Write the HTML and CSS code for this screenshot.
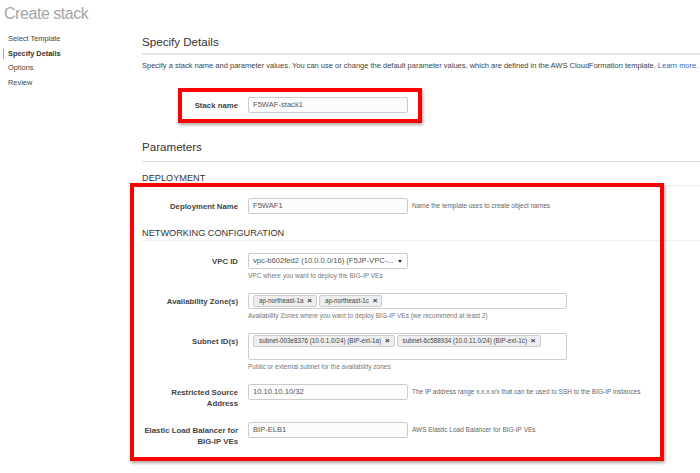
FILE: index.html
```html
<!DOCTYPE html>
<html lang="en">
<head>
  <meta charset="UTF-8">
  <meta name="viewport" content="width=device-width, initial-scale=1.0">
  <title>Create stack</title>
  <link rel="stylesheet" href="styles.css">
</head>
<body>

    <header class="page-title">Create stack</header>

    <div class="layout">
        <!-- wizard steps -->
        <nav class="steps">
            <a class="step">Select Template</a>
            <a class="step active">Specify Details</a>
            <a class="step">Options</a>
            <a class="step">Review</a>
        </nav>

        <main class="content">
            <section>
                <h2 class="section-title first">Specify Details</h2>
                <p class="intro">Specify a stack name and parameter values. You can use or change the default parameter values, which are defined in the AWS CloudFormation template. <a href="#" class="learn-link">Learn more.</a></p>

                <div class="field-row">
                    <label class="field-label">Stack name</label>
                    <div class="field-control">
                        <div class="text-input">F5WAF-stack1</div>
                    </div>
                </div>
            </section>

            <section>
                <h2 class="section-title">Parameters</h2>

                <h3 class="group-title">DEPLOYMENT</h3>
                <div class="field-row">
                    <label class="field-label">Deployment Name</label>
                    <div class="field-control">
                        <div class="text-input">F5WAF1</div>
                    </div>
                    <span class="side-help">Name the template uses to create object names</span>
                </div>

                <h3 class="group-title">NETWORKING CONFIGURATION</h3>
                <div class="field-row">
                    <label class="field-label">VPC ID</label>
                    <div class="field-control">
                        <div class="select-input">
                            <span>vpc-b602fed2 (10.0.0.0/16) (F5JP-VPC-...</span>
                            <span class="caret"></span>
                        </div>
                        <p class="field-help">VPC where you want to deploy the BIG-IP VEs</p>
                    </div>
                </div>

                <div class="field-row">
                    <label class="field-label">Availability Zone(s)</label>
                    <div class="field-control wide">
                        <div class="tag-input">
                            <span class="tag">ap-northeast-1a <b>&times;</b></span>
                            <span class="tag">ap-northeast-1c <b>&times;</b></span>
                        </div>
                        <p class="field-help">Availability Zones where you want to deploy BIG-IP VEs (we recommend at least 2)</p>
                    </div>
                </div>

                <div class="field-row">
                    <label class="field-label">Subnet ID(s)</label>
                    <div class="field-control wide">
                        <div class="tag-input tall">
                            <span class="tag">subnet-003e8376 (10.0.1.0/24) (BIP-ext-1a) <b>&times;</b></span>
                            <span class="tag">subnet-6c588934 (10.0.11.0/24) (BIP-ext-1c) <b>&times;</b></span>
                        </div>
                        <p class="field-help">Public or external subnet for the availability zones</p>
                    </div>
                </div>

                <div class="field-row">
                    <label class="field-label">Restricted Source Address</label>
                    <div class="field-control">
                        <div class="text-input">10.10.10.10/32</div>
                    </div>
                    <span class="side-help">The IP address range x.x.x.x/x that can be used to SSH to the BIG-IP instances</span>
                </div>

                <div class="field-row">
                    <label class="field-label">Elastic Load Balancer for BIG-IP VEs</label>
                    <div class="field-control">
                        <div class="text-input">BIP-ELB1</div>
                    </div>
                    <span class="side-help">AWS Elastic Load Balancer for BIG-IP VEs</span>
                </div>
            </section>
        </main>
    </div>

    <!-- red highlight frames -->
    <div class="callout callout-stack"></div>
    <div class="callout callout-params"></div>

</body>
</html>
```

FILE: styles.css
```css
/* Reset default margin and padding */
body, h1, h2, h3, p, label {
    margin: 0;
    padding: 0;
}

body {
    font-family: "Liberation Sans", Arial, sans-serif;
    background-color: #ffffff;
    color: #333333;
    overflow: hidden;
}

.page-title {
    font-size: 16px;
    letter-spacing: -0.45px;
    line-height: 20px;
    padding: 4px 0 4px 4px;
    color: #a6a6a6;
}

.layout {
    display: flex;
}

/* Wizard steps */
.steps {
    width: 142px;
    flex-shrink: 0;
    padding-top: 6px;
    display: flex;
    flex-direction: column;
}

.step {
    font-size: 7.4px;
    line-height: 10.6px;
    margin: 0 0 4px 3px;
    padding-left: 4px;
    border-left: 1.5px solid transparent;
    color: #444444;
}

.step.active {
    font-weight: bold;
    color: #333333;
    border-left-color: #f7931e;
}

/* Main column */
.content {
    flex: 1;
    min-width: 0;
}

.section-title {
    font-size: 11.6px;
    font-weight: normal;
    line-height: 16px;
    color: #333333;
    margin-top: 26px;
    padding-bottom: 6px;
    border-bottom: 1px solid #dddddd;
}

.section-title.first {
    margin-top: 6px;
    padding-bottom: 3px;
    border-bottom: 2px solid #e6e6e6;
}

.intro {
    font-size: 7.5px;
    line-height: 10px;
    margin: 6px 0 26px;
    white-space: nowrap;
    color: #444444;
}

.learn-link {
    color: #1f6fbf;
    text-decoration: none;
}

.group-title {
    font-size: 9.2px;
    font-weight: normal;
    line-height: 12px;
    margin: 10px 0 12px;
    padding-bottom: 1px;
    border-bottom: 1px solid #eeeeee;
    color: #333333;
}

/* Form rows */
.field-row {
    display: flex;
    align-items: flex-start;
    margin-bottom: 13px;
}

.field-label {
    width: 96px;
    flex-shrink: 0;
    margin-right: 10px;
    padding-top: 3px;
    text-align: right;
    font-size: 7.8px;
    font-weight: bold;
    line-height: 11px;
    color: #444444;
}

.field-control {
    width: 160px;
    flex-shrink: 0;
}

.field-control.wide {
    width: 319px;
}

.text-input,
.select-input {
    box-sizing: border-box;
    height: 16px;
    padding: 0 4px;
    border: 1px solid #cccccc;
    border-radius: 2px;
    background-color: #fcfcfc;
    font-size: 7.6px;
    line-height: 14px;
    color: #555555;
}

.select-input {
    display: flex;
    align-items: center;
    justify-content: space-between;
    background-color: #ffffff;
    white-space: nowrap;
    padding-right: 5px;
}

.caret {
    width: 0;
    height: 0;
    border-left: 2.5px solid transparent;
    border-right: 2.5px solid transparent;
    border-top: 3px solid #333333;
}

.tag-input {
    box-sizing: border-box;
    min-height: 16px;
    padding: 1px 4px;
    border: 1px solid #cccccc;
    border-radius: 2px;
    display: flex;
    flex-wrap: wrap;
    align-content: flex-start;
    gap: 2px;
}

.tag-input.tall {
    height: 27px;
}

.tag {
    box-sizing: border-box;
    height: 12px;
    padding: 0 4px 0 5px;
    border: 1px solid #cccccc;
    border-radius: 2px;
    background-color: #eeeeee;
    font-size: 6.3px;
    line-height: 10px;
    color: #444444;
    white-space: nowrap;
}

.tag b {
    font-size: 8px;
    margin-left: 2px;
    color: #333333;
}

.field-help {
    margin-top: 3px;
    font-size: 6.5px;
    line-height: 8px;
    color: #777777;
}

.side-help {
    margin-left: 4px;
    font-size: 6.5px;
    line-height: 16px;
    color: #666666;
    white-space: nowrap;
}

/* Red frames drawn over the form */
.callout {
    position: absolute;
    border: 4px solid #ff0000;
    box-shadow: 1px 2px 3px rgba(0, 0, 0, 0.35);
    pointer-events: none;
}

.callout-stack {
    left: 178px;
    top: 88px;
    width: 236px;
    height: 27px;
}

.callout-params {
    left: 130px;
    top: 183px;
    width: 526px;
    height: 270px;
}
```
